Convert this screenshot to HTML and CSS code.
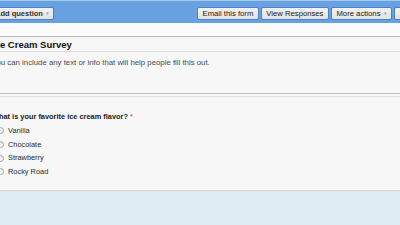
FILE: index.html
```html
<!DOCTYPE html>
<html>
<head>
<meta charset="utf-8">
<link rel="stylesheet" href="styles.css">
</head>
<body>
<div class="page">
  <div class="toolbar">
    <div class="btn add">Add question <span class="caret">▾</span></div>
    <div class="right">
      <div class="btn">Email this form</div>
      <div class="btn">View Responses</div>
      <div class="btn">More actions <span class="caret">▾</span></div>
      <div class="btn">Save</div>
    </div>
  </div>
  <div class="strip"></div>
  <div class="form">
    <div class="title">Ice Cream Survey</div>
    <div class="desc">You can include any text or info that will help people fill this out.</div>
    <div class="sep"></div>
    <div class="question">
      <div class="qtitle">What is your favorite ice cream flavor? <span class="req">*</span></div>
      <div class="opt"><span class="radio"></span>Vanilla</div>
      <div class="opt"><span class="radio"></span>Chocolate</div>
      <div class="opt"><span class="radio"></span>Strawberry</div>
      <div class="opt"><span class="radio"></span>Rocky Road</div>
    </div>
  </div>
  <div class="bottom"></div>
</div>
</body>
</html>
```
FILE: styles.css
```css
html, body {
  margin: 0;
  padding: 0;
  width: 400px;
  height: 225px;
  overflow: hidden;
  background: #deedf3;
  font-family: "Liberation Sans", Arial, sans-serif;
  color: #222;
}
.page {
  display: flex;
  flex-direction: column;
  width: 400px;
}
.toolbar {
  height: 23px;
  background: #68a1e1;
  border-top: 1px solid #a9c8ee;
  box-sizing: border-box;
  display: flex;
  align-items: flex-start;
  padding-top: 6px;
  white-space: nowrap;
}
.btn {
  flex: none;
  height: 13px;
  box-sizing: border-box;
  background: linear-gradient(#f2f2f2, #e2e2e2);
  border: 1px solid #4a82c8;
  border-radius: 2px;
  font-size: 7.7px;
  line-height: 11px;
  padding: 0 4px;
  color: #1a1a1a;
}
.add {
  margin-left: -10px;
  font-weight: bold;
  font-size: 7.5px;
  color: #333;
}
.caret {
  font-size: 5px;
  color: #9a9a9a;
  font-weight: normal;
  vertical-align: 1px;
  margin-left: 1px;
}
.right {
  display: flex;
  gap: 2px;
  margin-left: 143px;
}
.right .btn {
  padding: 0 4.5px;
}
.strip {
  height: 13px;
  background: #fbfbfb;
  border-bottom: 1px solid #b8b8b8;
}
.form {
  background: #f7f7f7;
  margin-left: -8px;
  border-bottom: 1px solid #d6d6d6;
}
.title {
  font-weight: bold;
  font-size: 9.5px;
  height: 14px;
  line-height: 15px;
  color: #111;
  border-bottom: 1px solid #dadada;
}
.desc {
  font-size: 7.8px;
  line-height: 10px;
  color: #4a4a4a;
  padding-top: 6px;
  height: 42px;
  box-sizing: border-box;
  border-bottom: 1px solid #c2c2c2;
}
.sep {
  height: 2px;
  border-bottom: 1px solid #e2e2e2;
}
.question {
  padding: 13px 0 11px 0;
}
.qtitle {
  font-weight: bold;
  font-size: 7.4px;
  line-height: 14px;
  color: #1a1a1a;
}
.req { color: #d33; font-weight: normal; }
.opt {
  font-size: 7.4px;
  line-height: 13.7px;
  height: 13.7px;
  color: #2a2a2a;
  display: flex;
  align-items: center;
}
.radio {
  width: 7px;
  height: 7px;
  box-sizing: border-box;
  border: 1px solid #a5a5a5;
  border-radius: 50%;
  background: linear-gradient(#e6e6e6, #ffffff);
  margin-left: 5px;
  margin-right: 4px;
}
.bottom {
  flex: 1;
}
```
